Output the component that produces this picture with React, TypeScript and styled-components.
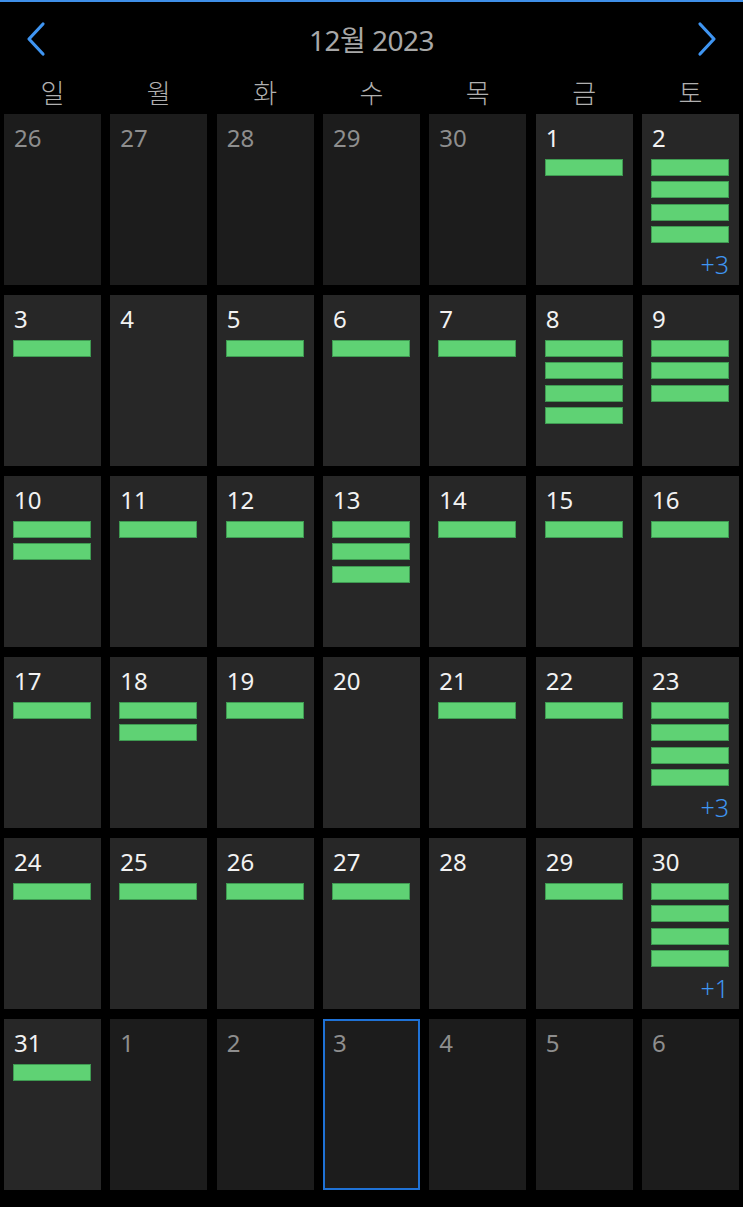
import { createGlobalStyle } from 'styled-components';
import styled from 'styled-components';

const GlobalStyle = createGlobalStyle`
  * { box-sizing: border-box; }
  body {
    margin: 0;
    background: #000;
    font-family: 'Noto Sans', 'Noto Sans CJK KR', sans-serif;
  }
`;

type Day = {
  date: number;
  inMonth: boolean;
  events: number;
  more?: number;
  today?: boolean;
};

const WEEKDAYS = ['일', '월', '화', '수', '목', '금', '토'];

// events shown per december day, extra count when the cell overflows
const EVENTS: Record<number, [number, number?]> = {
  1: [1], 2: [4, 3], 3: [1], 4: [0], 5: [1], 6: [1], 7: [1],
  8: [4], 9: [3], 10: [2], 11: [1], 12: [1], 13: [3], 14: [1],
  15: [1], 16: [1], 17: [1], 18: [2], 19: [1], 20: [0], 21: [1],
  22: [1], 23: [4, 3], 24: [1], 25: [1], 26: [1], 27: [1], 28: [0],
  29: [1], 30: [4, 1], 31: [1],
};

const buildDays = (): Day[] => {
  const days: Day[] = [];
  [26, 27, 28, 29, 30].forEach((d) => days.push({ date: d, inMonth: false, events: 0 }));
  for (let d = 1; d <= 31; d += 1) {
    const [events, more] = EVENTS[d];
    days.push({ date: d, inMonth: true, events, more });
  }
  [1, 2, 3, 4, 5, 6].forEach((d) =>
    days.push({ date: d, inMonth: false, events: 0, today: d === 3 }),
  );
  return days;
};

const Chevron = ({ dir }: { dir: 'left' | 'right' }) => (
  <svg width="24" height="36" viewBox="0 0 24 36">
    <path
      d={dir === 'left' ? 'M19 3 L5 18 L19 33' : 'M5 3 L19 18 L5 33'}
      fill="none"
      stroke="#3f95f2"
      strokeWidth="3.2"
      strokeLinecap="round"
      strokeLinejoin="round"
    />
  </svg>
);

const App = () => {
  const days = buildDays();

  return (
    <StyledPage>
      <GlobalStyle />
      <StyledTopLine />
      <StyledHeader>
        <StyledNavButton>
          <Chevron dir="left" />
        </StyledNavButton>
        <StyledTitle>12월 2023</StyledTitle>
        <StyledNavButton>
          <Chevron dir="right" />
        </StyledNavButton>
      </StyledHeader>
      <StyledWeekdays>
        {WEEKDAYS.map((w) => (
          <StyledWeekday key={w}>{w}</StyledWeekday>
        ))}
      </StyledWeekdays>
      <StyledGrid>
        {days.map((day, i) => (
          <StyledCell key={i} $inMonth={day.inMonth} $today={!!day.today}>
            <StyledDate $inMonth={day.inMonth}>{day.date}</StyledDate>
            <StyledBars>
              {Array.from({ length: day.events }).map((_, j) => (
                <StyledBar key={j} />
              ))}
            </StyledBars>
            {day.more ? <StyledMore>+{day.more}</StyledMore> : null}
          </StyledCell>
        ))}
      </StyledGrid>
    </StyledPage>
  );
};

export default App;

const StyledPage = styled.div`
  min-height: 1207px;
  background: #000;
`;

const StyledTopLine = styled.div`
  height: 2px;
  background: #3f8fe8;
`;

const StyledHeader = styled.div`
  display: flex;
  align-items: center;
  justify-content: space-between;
  height: 76px;
  padding: 0 24px 0 24px;
  margin-top: -1px;
`;

const StyledNavButton = styled.div`
  display: flex;
  align-items: center;
  justify-content: center;
  width: 24px;
  height: 36px;
`;

const StyledTitle = styled.div`
  color: #a8a8a8;
  font-size: 28px;
  letter-spacing: -0.5px;
`;

const StyledWeekdays = styled.div`
  display: grid;
  grid-template-columns: repeat(7, 1fr);
  column-gap: 9.33px;
  padding: 0 4px;
  height: 38px;
  margin-top: -1px;
`;

const StyledWeekday = styled.div`
  color: #b0b0b0;
  font-size: 26px;
  font-weight: 300;
  line-height: 34px;
  text-align: center;
`;

const StyledGrid = styled.div`
  display: grid;
  grid-template-columns: repeat(7, 1fr);
  grid-auto-rows: 171px;
  column-gap: 9.33px;
  row-gap: 10px;
  padding: 0 4px;
`;

const StyledCell = styled.div<{ $inMonth: boolean; $today: boolean }>`
  display: flex;
  flex-direction: column;
  padding: 9px 10px 7px 9px;
  background: ${({ $inMonth }) => ($inMonth ? '#272727' : '#1c1c1c')};
  border: ${({ $today }) => ($today ? '2px solid #1f72d6' : 'none')};
  ${({ $today }) => ($today && 'padding: 7px 8px 5px 7px;')}
`;

const StyledDate = styled.div<{ $inMonth: boolean }>`
  padding-left: 1px;
  color: ${({ $inMonth }) => ($inMonth ? '#f2f2f2' : '#8e8e8e')};
  font-size: 24px;
  line-height: 30px;
`;

const StyledBars = styled.div`
  display: flex;
  flex-direction: column;
  gap: 5.3px;
  margin-top: 6px;
`;

const StyledBar = styled.div`
  height: 17px;
  background: #5fd274;
  border: 1px solid #3f9a52;
`;

const StyledMore = styled.div`
  align-self: flex-end;
  margin-top: auto;
  color: #3f95f2;
  font-size: 25px;
  font-weight: 300;
  line-height: 28px;
`;
